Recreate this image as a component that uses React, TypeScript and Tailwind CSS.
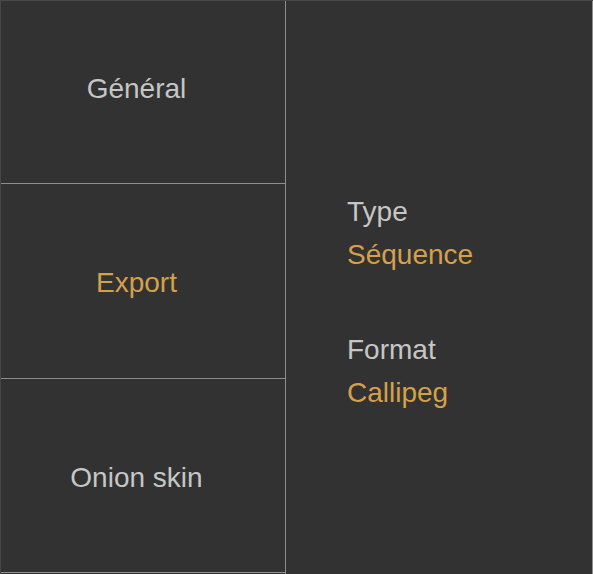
import React from "react";

const tabs = [
  { label: "Général", active: false, cell: "h-[183px] border-b pb-[6px]" },
  { label: "Export", active: true, cell: "h-[195px] border-b pt-[4px]" },
  { label: "Onion skin", active: false, cell: "h-[194px] border-b pt-[4px]" },
];

const settings = [
  { name: "Type", value: "Séquence" },
  { name: "Format", value: "Callipeg" },
];

export default function App() {
  return (
    <div
      className="flex w-[593px] h-[574px] bg-[#323232] border-l border-t border-[#474747] overflow-hidden"
      style={{ fontFamily: '"Liberation Sans", Arial, sans-serif' }}
    >
      <div className="flex flex-col w-[285px] shrink-0 border-r border-[#8e8e8e]">
        {tabs.map((tab) => (
          <div
            key={tab.label}
            className={`flex items-center justify-center pr-[13px] border-[#8e8e8e] ${tab.cell}`}
          >
            <span
              className={`text-[28px] ${
                tab.active ? "text-[#d4a04c]" : "text-[#c6c6c6]"
              }`}
            >
              {tab.label}
            </span>
          </div>
        ))}
      </div>
      <div className="flex-1 flex flex-col gap-[52px] pl-[61px] pt-[189px] border-r border-[#8e8e8e]">
        {settings.map((s) => (
          <div key={s.name} className="flex flex-col text-[28px] leading-[43px]">
            <span className="text-[#c6c6c6]">{s.name}</span>
            <span className="text-[#d4a04c]">{s.value}</span>
          </div>
        ))}
      </div>
    </div>
  );
}
